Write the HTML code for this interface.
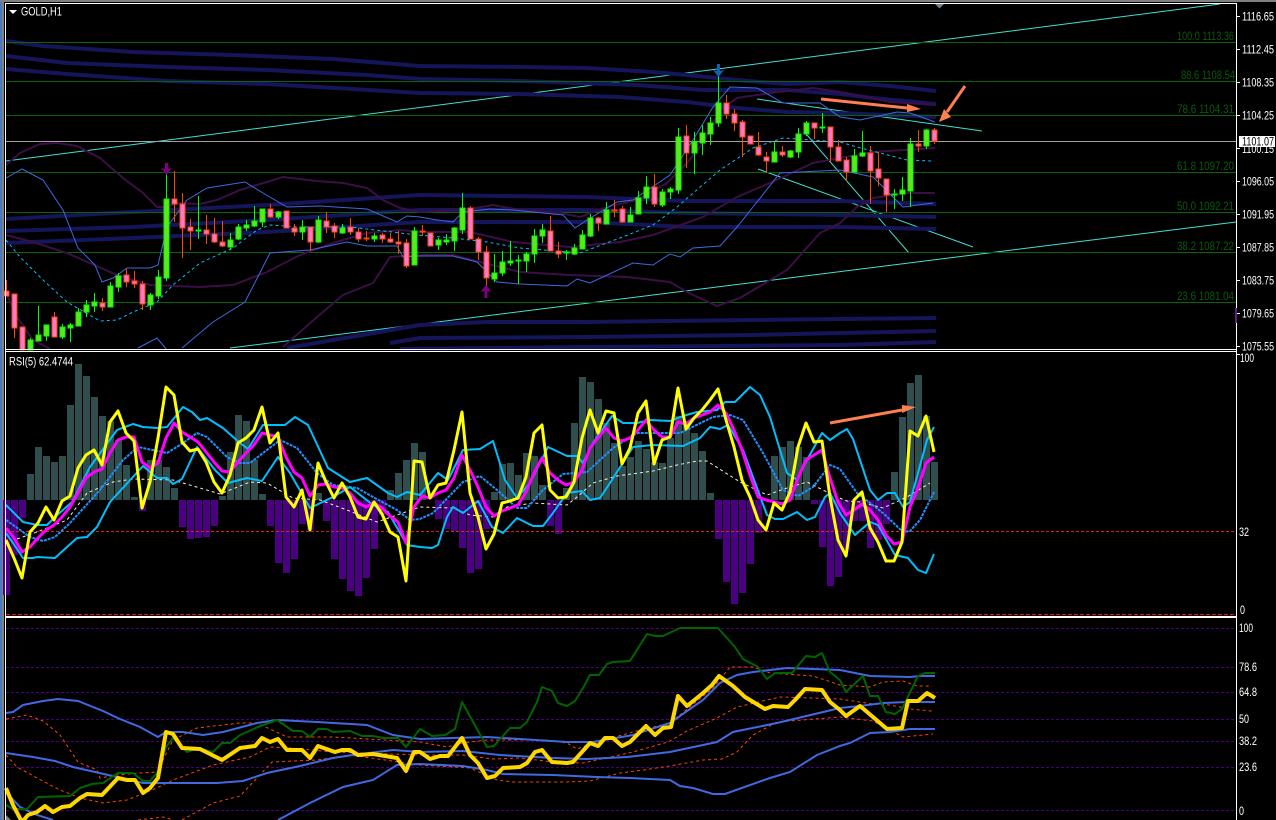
<!DOCTYPE html>
<html>
<head>
<meta charset="utf-8">
<title>GOLD,H1</title>
<style>
html,body{margin:0;padding:0;background:#000;width:1276px;height:820px;overflow:hidden}
svg{display:block}
text{font-family:"Liberation Sans",sans-serif;font-size:12px;fill:#fff}
.fib{fill:#0a5a0a}
.l{fill:none;stroke-linejoin:round}
.nv{stroke:#15155a;stroke-width:4;fill:none}
.pp{stroke:#3b0f45;stroke-width:2;fill:none}
.bl{stroke:#4169e1;stroke-width:1;fill:none}
.tr{stroke:#40e0d0;stroke-width:1;fill:none}
.or{stroke:#ff4500;stroke-width:1;stroke-dasharray:3 3;fill:none}
.rb{stroke:#4169e1;stroke-width:2;fill:none}
</style>
</head>
<body>
<svg width="1276" height="820" viewBox="0 0 1276 820" xmlns="http://www.w3.org/2000/svg">
<rect width="1276" height="820" fill="#000"/>
<rect x="0" y="0" width="2" height="820" fill="#4a7ab8"/>
<rect x="2" y="0" width="2" height="820" fill="#808080"/>
<rect x="0" y="0" width="1276" height="2" fill="#808080"/>

<!-- MAIN PANE -->
<g>
<path class="tr" d="M6 161L1220 4"/>
<path class="tr" d="M230 348L1236 222"/>
<path class="tr" d="M757 99L982 131"/>
<path class="tr" d="M758 169L973 247"/>
<path class="tr" d="M807 135L909 253"/>
<path class="nv" d="M6 41L43 46L133 52L233 55L333 59L420 66L520 67L587 68L653 72L687 75L737 80L787 84L840 82L890 86L936 91"/>
<path class="nv" d="M6 56L67 63L167 67L267 70L367 75L420 79L520 81L637 85L703 90L787 90L840 94L873 98L936 104"/>
<path class="nv" d="M6 69L67 74L167 81L267 84L420 93L520 94L620 97L687 102L737 108L787 112L840 113L936 117"/>
<path class="nv" d="M6 219L133 212L267 205L420 195L587 197L687 201L840 201L936 204"/>
<path class="nv" d="M6 231L133 227L267 220L420 210L587 210L687 213L840 215L936 217"/>
<path class="nv" d="M6 243L133 238L267 232L420 222L587 222L687 227L840 227L936 229"/>
<path class="nv" d="M287 348L420 325L487 322L587 322L840 319L936 318"/>
<path class="nv" d="M390 343L420 338L587 337L753 335L840 333L936 331"/>
<path class="nv" d="M400 349L587 347L840 345L936 342"/>
<g stroke="#0a640a" stroke-width="1" shape-rendering="crispEdges">
<path d="M6 42.5H1236M6 81.5H1236M6 115.5H1236M6 172.5H1236M6 212.5H1236M6 252.5H1236M6 302.5H1236"/>
</g>
<path d="M6 141.5H1236" stroke="#a0a0a0" stroke-width="1" shape-rendering="crispEdges"/>
<path class="pp" d="M6 165L20 153L40 144L57 143L77 146L100 158L123 178L143 193L157 207L163 207L180 203L200 204L217 200L240 190L267 182L283 177L317 181L343 183L367 188L383 200L400 208L420 212L470 209L493 205L520 210L560 213L580 217L607 207L637 200L667 183L687 163L703 143L720 110L737 98L770 93L813 88L840 92L857 95L890 102L936 105"/>
<path class="pp" d="M6 235L33 242L67 253L117 275L150 285L200 287L233 285L267 272L300 255L333 243L367 233L400 230L420 232L470 232L513 242L570 247L620 242L653 235L703 217L737 197L770 183L813 163L840 158L873 152L935 148"/>
<path class="pp" d="M6 293L17 317L33 340L50 349M283 347L317 317L343 295L373 283L390 257L420 255L453 255L480 262L520 272L570 275L627 277L670 282L687 292L717 306L740 298L787 270L820 233L840 223L857 207L873 198L907 193L935 193"/>
<path class="bl" d="M6 178L22 169L43 180L63 210L78 248L95 265L102 282L113 278L127 268L150 268L158 265L167 227L187 200L207 188L245 182L263 193L287 207L320 206L367 209L397 222L407 216L420 217L437 220L453 222L463 212L490 209L513 210L563 215L575 228L587 220L617 202L633 200L670 175L693 140L713 107L730 87L757 88L783 103L820 103L840 117L860 120L897 112L910 113L935 122"/>
<path class="bl" d="M138 348L157 338L167 350M182 348L213 322L245 302L270 253L310 250L347 242L367 246L397 246L403 257L420 256L453 256L477 262L497 282L520 284L567 286L577 279L590 283L633 263L653 265L670 254L680 257L693 248L720 246L737 227L753 207L780 173L840 170L873 177L903 207L933 203"/>
<path d="M6 240L20 257L43 280L67 302L100 321L117 320L133 312L157 302L173 285L200 263L233 248L257 230L270 225L300 227L350 227L417 235L453 238L487 242L520 248L580 253L620 238L653 225L677 207L720 170L753 148L783 138L840 142L857 147L907 160L932 161" fill="none" stroke="#00bfff" stroke-width="1" stroke-dasharray="3 3"/>

<!-- wicks green -->
<path stroke="#00ff00" stroke-width="1" shape-rendering="crispEdges" fill="none" d="M30.5 338V350M38.5 306V341M46.5 325V341M62.5 324V339M70.5 323V342M78.5 308V326M86.5 300V317M94.5 293V312M110.5 282V307M118.5 273V292M150.5 293V310M158.5 270V299M166.5 172V281M198.5 196V239M230.5 233V250M238.5 224V240M246.5 220V231M254.5 206V227M262.5 209V227M278.5 211V219M302.5 220V240M318.5 216V243M342.5 224V234M374.5 233V242M414.5 227V265M438.5 238V250M446.5 234V245M454.5 227V251M462.5 193V234M494.5 254V282M502.5 251V276M510.5 241V266M518.5 255V284M526.5 252V272M534.5 229V263M542.5 224V243M566.5 250V260M574.5 244V255M582.5 230V249M590.5 214V237M606.5 202V224M630.5 207V222M638.5 191V214M646.5 176V204M662.5 189V207M670.5 187V199M678.5 128V194M694.5 132V174M702.5 125V155M710.5 117V145M718.5 76V127M774.5 141V162M790.5 150V158M798.5 128V158M806.5 121V136M822.5 113V133M854.5 149V173M862.5 131V157M894.5 189V209M902.5 177V201M910.5 138V207M926.5 129V149"/>
<!-- wicks red -->
<path stroke="#ff4500" stroke-width="1" shape-rendering="crispEdges" fill="none" d="M6.5 280V296M14.5 294V338M22.5 327V350M54.5 312V337M102.5 298V311M126.5 269V287M134.5 271V288M142.5 281V310M174.5 171V222M182.5 193V258M190.5 219V250M206.5 215V244M214.5 218V243M222.5 221V247M270.5 204V218M286.5 211V228M294.5 224V236M310.5 227V251M326.5 212V233M334.5 223V238M350.5 218V235M358.5 228V242M366.5 231V241M382.5 233V243M390.5 233V243M398.5 231V254M406.5 239V268M422.5 225V236M430.5 233V246M470.5 206V239M478.5 237V260M486.5 246V292M550.5 216V251M558.5 242V258M598.5 217V231M614.5 200V217M622.5 206V223M654.5 174V207M686.5 125V168M726.5 95V119M734.5 109V131M742.5 120V157M750.5 136V144M758.5 132V156M766.5 152V173M782.5 146V157M814.5 123V139M830.5 127V162M838.5 140V161M846.5 157V181M870.5 146V204M878.5 152V186M886.5 179V212M918.5 130V152M934.5 128V144"/>
<!-- bodies green -->
<path fill="#5fe61e" stroke="#00ff00" stroke-width="1" shape-rendering="crispEdges" d="M28 340h5v10h-5zM36 335h5v6h-5zM44 325h5v11h-5zM60 327h5v10h-5zM68 325h5v3h-5zM76 312h5v14h-5zM84 305h5v7h-5zM92 302h5v4h-5zM108 286h5v21h-5zM116 276h5v11h-5zM148 295h5v10h-5zM156 277h5v19h-5zM164 199h5v79h-5zM196 230h5v1h-5zM228 240h5v7h-5zM236 227h5v12h-5zM244 225h5v3h-5zM252 221h5v5h-5zM260 209h5v13h-5zM276 212h5v5h-5zM300 227h5v5h-5zM316 220h5v22h-5zM340 228h5v5h-5zM372 236h5v3h-5zM412 231h5v34h-5zM436 240h5v5h-5zM444 240h5v2h-5zM452 228h5v13h-5zM460 208h5v22h-5zM492 273h5v6h-5zM500 262h5v11h-5zM508 261h5v2h-5zM516 260h5v1h-5zM524 254h5v7h-5zM532 236h5v18h-5zM540 230h5v6h-5zM564 252h5v1h-5zM572 248h5v6h-5zM580 235h5v14h-5zM588 218h5v18h-5zM604 210h5v14h-5zM628 215h5v7h-5zM636 198h5v16h-5zM644 187h5v11h-5zM660 192h5v13h-5zM668 189h5v3h-5zM676 137h5v53h-5zM692 142h5v11h-5zM700 133h5v10h-5zM708 123h5v11h-5zM716 103h5v20h-5zM772 152h5v10h-5zM788 151h5v6h-5zM796 134h5v18h-5zM804 123h5v11h-5zM820 127h5v1h-5zM852 156h5v16h-5zM860 153h5v3h-5zM892 194h5v1h-5zM900 190h5v4h-5zM908 144h5v47h-5zM924 130h5v16h-5z"/>
<!-- bodies red -->
<path fill="#ff78c8" stroke="#ff4500" stroke-width="1" shape-rendering="crispEdges" d="M4 291h5v5h-5zM12 294h5v34h-5zM20 327h5v23h-5zM52 317h5v20h-5zM100 303h5v4h-5zM124 275h5v7h-5zM132 281h5v3h-5zM140 284h5v20h-5zM172 199h5v5h-5zM180 204h5v24h-5zM188 227h5v4h-5zM204 230h5v4h-5zM212 234h5v8h-5zM220 242h5v4h-5zM268 209h5v8h-5zM284 211h5v17h-5zM292 228h5v4h-5zM308 227h5v15h-5zM324 221h5v6h-5zM332 226h5v6h-5zM348 227h5v5h-5zM356 232h5v7h-5zM364 238h5v1h-5zM380 235h5v4h-5zM388 239h5v3h-5zM396 242h5v2h-5zM404 243h5v23h-5zM420 231h5v1h-5zM428 233h5v13h-5zM468 208h5v31h-5zM476 239h5v13h-5zM484 252h5v26h-5zM548 231h5v20h-5zM556 251h5v3h-5zM596 218h5v5h-5zM612 210h5v1h-5zM620 209h5v13h-5zM652 187h5v17h-5zM684 136h5v17h-5zM724 103h5v11h-5zM732 114h5v9h-5zM740 122h5v15h-5zM748 136h5v8h-5zM756 147h5v8h-5zM764 157h5v4h-5zM780 152h5v3h-5zM812 123h5v5h-5zM828 127h5v20h-5zM836 147h5v14h-5zM844 160h5v12h-5zM868 153h5v18h-5zM876 169h5v9h-5zM884 179h5v16h-5zM916 144h5v2h-5zM932 130h5v11h-5z"/>

<!-- signal arrows -->
<path d="M165 163h3v6l4-1l-5.500 7l-5.500-7l4 1z" fill="#800080"/>
<path d="M486 285l5.500 7l-4-1v7h-3v-7l-4 1z" fill="#800080"/>
<path d="M717 64h3v7l4-1l-5.500 7l-5.500-7l4 1z" fill="#0a64b4"/>

<!-- orange arrows -->
<path d="M821 99L907 108" stroke="#ff7f50" stroke-width="3" fill="none"/>
<path d="M921 109L907 104L907 112Z" fill="#ff7f50"/>
<path d="M965 86L947 112" stroke="#ff7f50" stroke-width="3" fill="none"/>
<path d="M939 122L944 109L951 117Z" fill="#ff7f50"/>

<!-- fib labels -->
<text class="fib" x="1177" y="40" textLength="57" lengthAdjust="spacingAndGlyphs">100.0 1113.36</text>
<text class="fib" x="1181" y="79" textLength="54" lengthAdjust="spacingAndGlyphs">88.6 1108.54</text>
<text class="fib" x="1177" y="113" textLength="57" lengthAdjust="spacingAndGlyphs">78.6  1104.31</text>
<text class="fib" x="1177" y="170" textLength="57" lengthAdjust="spacingAndGlyphs">61.8  1097.20</text>
<text class="fib" x="1177" y="210" textLength="57" lengthAdjust="spacingAndGlyphs">50.0  1092.21</text>
<text class="fib" x="1177" y="250" textLength="57" lengthAdjust="spacingAndGlyphs">38.2  1087.22</text>
<text class="fib" x="1177" y="300" textLength="57" lengthAdjust="spacingAndGlyphs">23.6  1081.04</text>
<path d="M935 4h9l-4.500 4.500z" fill="#708090"/>
</g>

<!-- RSI PANE -->
<g shape-rendering="crispEdges">
<path fill="#2f4f4f" d="M27 474h7v26h-7zM35 447h7v53h-7zM43 456h7v44h-7zM51 462h7v38h-7zM59 456h7v44h-7zM67 405h7v95h-7zM75 364h7v136h-7zM83 376h7v124h-7zM91 397h7v103h-7zM99 416h7v84h-7zM107 421h7v79h-7zM115 440h7v60h-7zM123 465h7v35h-7zM131 497h7v3h-7zM147 460h7v40h-7zM155 460h7v40h-7zM163 467h7v33h-7zM171 488h7v12h-7zM219 496h7v4h-7zM227 452h7v48h-7zM235 415h7v85h-7zM243 421h7v79h-7zM251 460h7v40h-7zM259 494h7v6h-7zM315 493h7v7h-7zM387 490h7v10h-7zM395 473h7v27h-7zM403 460h7v40h-7zM411 443h7v57h-7zM419 452h7v48h-7zM491 492h7v8h-7zM499 464h7v36h-7zM507 463h7v37h-7zM515 475h7v25h-7zM523 453h7v47h-7zM531 456h7v44h-7zM539 485h7v15h-7zM563 488h7v12h-7zM571 423h7v77h-7zM579 377h7v123h-7zM587 382h7v118h-7zM595 399h7v101h-7zM603 423h7v77h-7zM611 443h7v57h-7zM619 466h7v34h-7zM627 457h7v43h-7zM635 441h7v59h-7zM643 449h7v51h-7zM651 462h7v38h-7zM659 463h7v37h-7zM667 438h7v62h-7zM675 416h7v84h-7zM683 421h7v79h-7zM691 433h7v67h-7zM699 451h7v49h-7zM707 493h7v7h-7zM771 456h7v44h-7zM779 447h7v53h-7zM787 441h7v59h-7zM795 447h7v53h-7zM803 457h7v43h-7zM891 472h7v28h-7zM899 417h7v83h-7zM907 383h7v117h-7zM915 375h7v125h-7zM923 416h7v84h-7zM931 462h7v38h-7z"/>
<path fill="#4b0082" d="M3 500h7v95h-7zM11 500h7v55h-7zM19 500h7v18h-7zM139 500h7v11h-7zM179 500h7v27h-7zM187 500h7v39h-7zM195 500h7v38h-7zM203 500h7v37h-7zM211 500h7v26h-7zM267 500h7v26h-7zM275 500h7v63h-7zM283 500h7v73h-7zM291 500h7v59h-7zM299 500h7v24h-7zM307 500h7v30h-7zM323 500h7v21h-7zM331 500h7v59h-7zM339 500h7v79h-7zM347 500h7v91h-7zM355 500h7v96h-7zM363 500h7v78h-7zM371 500h7v49h-7zM379 500h7v15h-7zM435 500h7v19h-7zM443 500h7v29h-7zM451 500h7v31h-7zM459 500h7v48h-7zM467 500h7v73h-7zM475 500h7v69h-7zM483 500h7v29h-7zM547 500h7v26h-7zM555 500h7v34h-7zM715 500h7v39h-7zM723 500h7v82h-7zM731 500h7v104h-7zM739 500h7v93h-7zM747 500h7v64h-7zM755 500h7v33h-7zM811 500h7v4h-7zM819 500h7v47h-7zM827 500h7v86h-7zM835 500h7v77h-7zM843 500h7v50h-7zM851 500h7v21h-7zM859 500h7v21h-7zM867 500h7v48h-7zM875 500h7v40h-7zM883 500h7v24h-7z"/>
</g>
<path d="M6 531.500H1236" stroke="#e01e1e" stroke-width="1" stroke-dasharray="3 2" shape-rendering="crispEdges" fill="none"/>
<path d="M6 614.500H1236" stroke="#f01414" stroke-width="1" stroke-dasharray="4 2" shape-rendering="crispEdges" fill="none"/>
<path d="M17 539L37 532L67 520L87 493L113 482L133 479L173 480L200 488L220 494L250 482L267 483L293 498L320 500L347 510L377 522L420 507L453 508L470 515L493 517L507 507L533 503L567 505L577 497L593 483L617 476L653 471L677 465L697 461L707 461L740 482L767 495L787 488L807 482L837 497L847 501L860 502L883 508L907 497L930 483" fill="none" stroke="#ffefd5" stroke-width="1" stroke-dasharray="3 3"/>
<path class="l" stroke="#1e90ff" stroke-width="2" stroke-dasharray="3 1" d="M6 520L30 537L43 541L55 537L70 523L100 490L123 460L138 447L167 453L180 445L197 433L207 437L227 457L240 463L250 463L280 440L297 448L317 473L333 485L357 488L373 497L397 510L410 520L420 519L433 513L463 482L480 476L497 490L517 508L527 508L543 490L563 474L587 472L613 448L637 433L680 433L713 417L730 415L743 420L763 453L783 490L798 496L813 487L830 465L840 469L857 493L883 513L903 532L910 531L920 520L934 492"/>
<path class="l" stroke="#00bfff" stroke-width="2" d="M6 505L23 522L37 525L47 525L55 517L72 502L90 467L117 430L133 424L143 427L157 428L167 427L183 407L192 412L200 420L207 418L223 428L240 443L248 449L263 425L285 425L295 417L308 425L328 468L350 482L367 478L388 493L397 497L407 492L420 495L438 473L448 480L463 450L480 449L493 441L505 480L517 498L530 483L548 447L567 456L577 456L583 463L593 443L612 416L623 423L637 423L650 420L670 421L683 416L697 412L717 410L725 402L735 402L750 387L760 395L770 417L787 473L797 480L807 460L822 433L830 440L840 433L847 429L853 439L870 490L878 500L887 493L895 493L903 507L910 502L927 440L934 427"/>
<path class="l" stroke="#00bfff" stroke-width="2" d="M6 533L13 543L23 558L33 558L37 557L55 558L67 547L77 538L87 537L97 527L110 502L143 466L157 478L167 478L173 484L182 479L197 447L215 470L228 483L247 478L262 481L278 457L290 473L310 508L333 497L350 487L373 505L388 512L407 545L420 547L432 548L438 545L447 517L453 507L463 513L478 501L492 527L503 533L517 518L533 526L543 526L553 513L567 493L582 491L590 500L600 498L610 483L633 447L653 445L683 446L700 438L710 427L720 429L728 425L743 450L767 515L775 519L783 519L797 512L807 520L815 517L825 497L830 493L840 513L855 535L870 522L878 525L895 555L908 558L918 570L926 573L934 554"/>
<path class="l" stroke="#ff00ff" stroke-width="3" d="M6 528L14 538L22 552L30 547L38 538L46 530L54 525L62 517L70 507L78 493L86 478L94 472L102 469L110 453L118 440L126 437L134 437L142 462L150 468L158 463L166 438L174 423L182 432L190 437L198 442L206 452L214 462L222 471L230 472L238 462L246 453L254 445L262 433L270 435L278 437L286 457L294 472L302 478L310 496L318 485L326 484L334 487L342 488L350 493L358 503L366 507L374 503L382 508L390 516L398 522L406 543L414 507L422 496L430 498L438 493L446 490L454 478L462 455L470 470L478 487L486 507L494 516L502 511L510 508L518 505L526 492L534 473L542 458L550 473L558 480L566 485L574 482L582 470L590 448L598 438L606 428L614 438L622 441L630 438L638 430L646 420L654 430L662 437L670 437L678 422L686 424L694 418L702 415L710 412L718 405L726 413L734 430L742 450L750 475L758 497L766 500L774 502L782 504L790 500L798 478L806 460L814 455L822 450L830 478L838 502L846 515L854 510L862 504L870 510L878 520L886 535L894 544L902 542L910 507L918 488L926 463L934 457"/>
<path class="l" stroke="#ffff00" stroke-width="3" d="M6 540L14 558L22 578L30 532L38 523L46 507L54 520L62 501L70 496L78 468L86 455L94 450L102 465L110 422L118 411L126 433L134 441L142 508L150 482L158 438L166 387L174 395L182 442L190 451L198 449L206 462L214 482L222 493L230 475L238 443L246 438L254 430L262 407L270 443L278 433L286 497L294 507L302 490L310 530L318 463L326 482L334 498L342 483L350 497L358 517L366 519L374 502L382 514L390 532L398 537L406 581L414 461L422 462L430 498L438 485L446 483L454 450L462 412L470 493L478 517L486 549L494 534L502 503L510 501L518 498L526 477L534 433L542 425L550 490L558 498L566 497L574 482L582 438L590 410L598 433L606 411L614 413L622 464L630 448L638 413L646 401L654 464L662 440L670 437L678 388L686 429L694 418L702 410L710 400L718 389L726 420L734 447L742 480L750 497L758 520L766 530L774 503L782 510L790 492L798 447L806 423L814 442L822 441L830 497L838 540L846 556L854 500L862 492L870 528L878 542L886 561L894 561L902 542L910 431L918 436L926 416L934 452"/>
<!-- rsi arrow -->
<path d="M830 423L902 410" stroke="#ff7f50" stroke-width="3" fill="none"/>
<path d="M916 407L902 405L902 413Z" fill="#ff7f50"/>

<!-- STOCH PANE -->
<g stroke="#4b0082" stroke-width="1" stroke-dasharray="3 2" shape-rendering="crispEdges" fill="none">
<path d="M6 628.500H1236M6 667.500H1236M6 692.500H1236M6 719.500H1236M6 741.500H1236M6 767.500H1236M6 810.500H1236"/>
</g>
<path d="M6 815L11 820H6z" fill="#808080"/>
<path class="or" d="M6 719L27 715L43 721L60 735L70 750L78 762L97 770L100 778L117 775L140 773L157 772L173 740L197 728L240 723L257 723L287 737L333 737L420 742L447 747L462 743L487 740L547 740L567 743L577 749L593 743L633 732L670 723L713 688L730 667L753 667L770 673L813 676L840 685L870 687L883 682L903 681L917 686L932 686"/>
<path class="or" d="M6 755L17 767L37 778L60 790L80 798L103 803L127 800L157 788L173 780L213 765L250 757L270 747L290 748L333 752L420 755L463 755L493 759L520 758L553 762L583 763L633 752L668 742L687 731L717 718L737 707L780 697L840 699L873 704L890 705L910 709L932 711"/>
<path class="or" d="M138 820L163 817L173 820M182 820L213 803L240 796L257 778L272 762L317 760L350 755L420 765L470 768L497 780L513 782L567 782L590 781L620 773L643 770L670 766L703 760L722 759L737 752L753 735L777 722L840 717L873 721L890 730L903 737L933 734"/>
<path class="rb" d="M6 713L13 712L23 705L43 701L58 699L78 701L103 711L120 719L140 727L158 737L166 732L183 732L203 735L223 732L257 723L277 720L317 722L367 725L393 735L420 739L487 737L520 739L567 742L593 742L633 735L670 723L703 700L720 683L737 675L753 672L787 668L840 670L870 676L910 677L920 676L935 676"/>
<path class="rb" d="M6 753L33 757L55 761L73 767L117 777L143 783L167 783L217 783L243 781L267 773L300 766L333 758L353 755L393 750L420 752L463 751L500 755L553 758L587 759L627 757L670 752L717 742L733 732L777 723L840 708L860 706L883 703L907 702L935 702"/>
<path class="rb" d="M6 792L20 807L37 815L53 820M278 820L310 803L343 787L373 780L397 765L420 764L463 766L487 770L503 774L553 775L597 777L630 778L670 780L680 786L693 788L713 794L725 794L770 778L790 772L817 755L840 746L850 743L870 733L890 732L910 729L935 729"/>
<path class="l" stroke="#006400" stroke-width="2" d="M6 805L13 809L27 809L38 797L70 796L80 788L92 784L103 783L118 773L133 773L143 781L150 781L158 772L166 747L173 738L187 752L198 748L213 752L222 743L230 743L240 735L258 727L277 720L293 731L302 731L310 737L318 729L327 729L333 732L350 731L362 736L373 736L383 738L398 738L406 747L420 729L432 736L445 735L455 729L462 702L487 747L494 746L510 728L520 728L527 722L537 702L542 687L552 691L558 703L567 706L575 701L583 688L590 675L599 675L607 664L613 662L630 661L647 634L655 636L663 636L680 628L718 628L735 647L743 659L758 667L767 679L775 673L792 673L806 656L815 657L822 653L830 672L840 680L846 692L863 676L870 696L878 696L886 712L895 714L902 709L918 676L925 673L935 673"/>
<path class="l" stroke="#ffd700" stroke-width="4" d="M6 788L13 805L22 822L28 815L37 812L45 806L53 812L62 807L70 806L80 798L87 794L102 795L118 778L127 780L135 780L143 793L150 788L158 778L166 732L173 734L182 748L200 749L222 760L240 748L255 746L262 738L270 742L278 739L287 750L302 750L310 758L318 746L335 752L342 750L350 750L358 755L373 754L397 758L406 771L414 752L420 752L430 759L440 756L448 756L462 738L470 755L478 763L487 778L495 776L503 768L520 767L527 763L535 752L542 750L552 762L567 763L573 762L590 743L598 746L605 738L613 738L622 746L630 742L646 726L655 735L663 728L671 727L678 696L687 706L703 693L712 685L719 676L733 686L745 697L765 709L773 706L788 707L795 700L805 689L822 690L830 702L840 710L846 716L860 706L873 717L887 729L902 728L908 701L918 701L927 693L935 698"/>

<!-- frame lines -->
<g fill="#fff" shape-rendering="crispEdges">
<rect x="5" y="3" width="1232" height="1"/>
<rect x="5" y="3" width="1" height="817"/>
<rect x="1236" y="3" width="1" height="817"/>
<rect x="5" y="349" width="1232" height="1"/>
<rect x="5" y="351" width="1232" height="1"/>
<rect x="5" y="616" width="1232" height="2"/>
<path d="M1237 16h3v1h-3zM1237 49h3v1h-3zM1237 82h3v1h-3zM1237 115h3v1h-3zM1237 148h3v1h-3zM1237 181h3v1h-3zM1237 214h3v1h-3zM1237 247h3v1h-3zM1237 280h3v1h-3zM1237 313h3v1h-3zM1237 346h3v1h-3zM1237 354h3v1h-3z"/>
</g>
<rect x="1235" y="308" width="2" height="15" fill="#602080"/>

<!-- title & axis text -->
<path d="M9 10h8l-4 4z" fill="#fff"/>
<text x="21" y="15.5" textLength="41" lengthAdjust="spacingAndGlyphs">GOLD,H1</text>
<text x="9" y="365.5" textLength="64" lengthAdjust="spacingAndGlyphs">RSI(5) 62.4744</text>
<g>
<text x="1242" y="20.5" textLength="32" lengthAdjust="spacingAndGlyphs">1116.65</text>
<text x="1242" y="53.5" textLength="32" lengthAdjust="spacingAndGlyphs">1112.45</text>
<text x="1242" y="86.5" textLength="32" lengthAdjust="spacingAndGlyphs">1108.35</text>
<text x="1242" y="119.5" textLength="32" lengthAdjust="spacingAndGlyphs">1104.25</text>
<text x="1242" y="153" textLength="32" lengthAdjust="spacingAndGlyphs">1100.15</text>
<rect x="1239" y="136" width="36" height="11" fill="#fff"/>
<text x="1242" y="145.500" textLength="32" lengthAdjust="spacingAndGlyphs" style="fill:#000">1101.07</text>
<text x="1242" y="185.5" textLength="32" lengthAdjust="spacingAndGlyphs">1096.05</text>
<text x="1242" y="218.5" textLength="32" lengthAdjust="spacingAndGlyphs">1091.95</text>
<text x="1242" y="251.5" textLength="32" lengthAdjust="spacingAndGlyphs">1087.85</text>
<text x="1242" y="284.5" textLength="32" lengthAdjust="spacingAndGlyphs">1083.75</text>
<text x="1242" y="317.5" textLength="32" lengthAdjust="spacingAndGlyphs">1079.65</text>
<text x="1242" y="350.5" textLength="32" lengthAdjust="spacingAndGlyphs">1075.55</text>
<text x="1240" y="362" textLength="14" lengthAdjust="spacingAndGlyphs">100</text>
<text x="1239" y="536" textLength="10" lengthAdjust="spacingAndGlyphs">32</text>
<text x="1240" y="614" textLength="5" lengthAdjust="spacingAndGlyphs">0</text>
<text x="1239" y="632" textLength="14" lengthAdjust="spacingAndGlyphs">100</text>
<text x="1239" y="671" textLength="18" lengthAdjust="spacingAndGlyphs">78.6</text>
<text x="1239" y="696" textLength="18" lengthAdjust="spacingAndGlyphs">64.8</text>
<text x="1239" y="723" textLength="10" lengthAdjust="spacingAndGlyphs">50</text>
<text x="1239" y="745" textLength="18" lengthAdjust="spacingAndGlyphs">38.2</text>
<text x="1239" y="771" textLength="18" lengthAdjust="spacingAndGlyphs">23.6</text>
<text x="1239" y="815" textLength="5" lengthAdjust="spacingAndGlyphs">0</text>
</g>
</svg>
</body>
</html>
